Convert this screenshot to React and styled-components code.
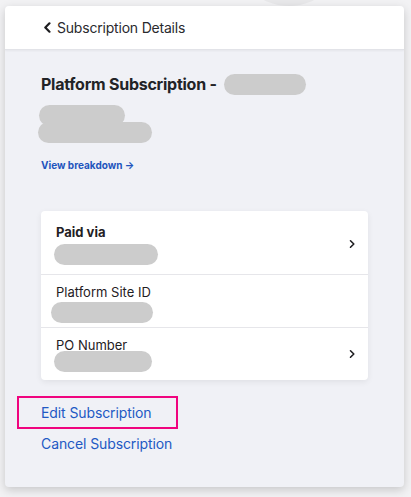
import React from "react";
import styled, { createGlobalStyle } from "styled-components";

const GlobalStyle = createGlobalStyle`
  html, body {
    margin: 0;
    padding: 0;
    background: #f2f2f4;
    font-family: Inter, "Noto Sans", "Liberation Sans", sans-serif;
    color: #222;
  }
`;

const Page = styled.div`
  position: relative;
  width: 411px;
  height: 497px;
  overflow: hidden;
  padding: 6px 7px 0 5px;
  box-sizing: border-box;
`;

const Backdrop = styled.div`
  position: absolute;
  top: -120px;
  left: 233px;
  width: 112px;
  height: 126px;
  border-radius: 0 0 56px 56px;
  background: #e8e8ea;
`;

const Panel = styled.div`
  position: relative;
  width: 399px;
  border-radius: 4px;
  background: #f0f1f6;
  box-shadow: 0 3px 10px rgba(0, 0, 0, 0.18);
  overflow: hidden;
`;

const Header = styled.div`
  height: 43px;
  display: flex;
  align-items: center;
  gap: 4px;
  padding-left: 37px;
  background: #fff;
  border-bottom: 1px solid #e2e3e8;
  box-shadow: 0 1px 2px rgba(0, 0, 0, 0.05);
  font-size: 14px;
  letter-spacing: -0.2px;
  color: #2a2a2e;
`;

const Body = styled.div`
  padding: 23px 36px 33px;
`;

const Title = styled.h1`
  margin: 0;
  display: flex;
  align-items: center;
  gap: 7px;
  font-size: 16px;
  line-height: 22px;
  font-weight: 700;
  letter-spacing: -0.25px;
  color: #222326;
`;

const Pill = styled.div`
  width: ${(p) => p.$w}px;
  height: 21px;
  border-radius: 11px;
  background: #cccccc;
  margin-top: ${(p) => p.$top || 0}px;
  margin-left: ${(p) => p.$left || 0}px;
`;

const Breakdown = styled.a`
  display: block;
  margin-top: 15px;
  font-size: 10px;
  line-height: 14px;
  font-weight: 700;
  color: #1f55bd;
  text-decoration: none;
`;

const Card = styled.div`
  margin-top: 39px;
  background: #fff;
  border-radius: 4px;
  box-shadow: 0 2px 6px rgba(0, 0, 0, 0.07);
  overflow: hidden;
`;

const Row = styled.div`
  display: flex;
  align-items: center;
  padding: ${(p) => p.$pad};
  padding-left: 15px;
  padding-right: 11px;
  & + & {
    border-top: 1px solid #e6e6ea;
  }
`;

const RowText = styled.div`
  flex: 1;
`;

const Label = styled.div`
  font-size: 13px;
  line-height: 18px;
  font-weight: ${(p) => (p.$bold ? 700 : 400)};
  color: #1f2023;
`;

const Links = styled.div`
  margin-top: 16px;
  display: flex;
  flex-direction: column;
  gap: 5px;
`;

const LinkItem = styled.a`
  display: flex;
  align-items: center;
  box-sizing: border-box;
  font-size: 14px;
  line-height: 20px;
  letter-spacing: -0.1px;
  color: #2259c4;
  text-decoration: none;
  ${(p) =>
    p.$highlight &&
    `
    width: 161px;
    height: 33px;
    margin-left: -24px;
    padding-left: 22px;
    border: 2px solid #f0047f;
  `}
`;

const Chevron = ({ dir = "right", size = 10 }) => (
  <svg width={size} height={size} viewBox="0 0 10 10" fill="none">
    <path
      d={dir === "right" ? "M3.5 1.8 L6.8 5 L3.5 8.2" : "M6.8 1.2 L3 5 L6.8 8.8"}
      stroke="#1f1f22"
      strokeWidth={dir === "right" ? 1.6 : 2}
      strokeLinecap="round"
      strokeLinejoin="round"
    />
  </svg>
);

const rows = [
  { label: "Paid via", bold: true, pad: "12px 0 9px", pill: 104, top: 3, left: -2, arrow: true },
  { label: "Platform Site ID", pad: "8px 0 4px", pill: 102, top: 1, left: -5 },
  { label: "PO Number", pad: "8px 0 8px", pill: 98, top: -3, left: -2, arrow: true },
];

export default function App() {
  return (
    <Page>
      <GlobalStyle />
      <Backdrop />
      <Panel>
        <Header>
          <Chevron dir="left" size={11} />
          Subscription Details
        </Header>
        <Body>
          <Title>
            Platform Subscription -
            <Pill $w={82} />
          </Title>
          <Pill $w={86} $top={10} $left={-2} />
          <Pill $w={114} $top={-4} $left={-3} />
          <Breakdown href="#">View breakdown →</Breakdown>
          <Card>
            {rows.map((r) => (
              <Row key={r.label} $pad={r.pad}>
                <RowText>
                  <Label $bold={r.bold}>{r.label}</Label>
                  <Pill $w={r.pill} $top={r.top} $left={r.left} />
                </RowText>
                {r.arrow && <Chevron />}
              </Row>
            ))}
          </Card>
          <Links>
            <LinkItem href="#" $highlight>
              Edit Subscription
            </LinkItem>
            <LinkItem href="#">Cancel Subscription</LinkItem>
          </Links>
        </Body>
      </Panel>
    </Page>
  );
}
